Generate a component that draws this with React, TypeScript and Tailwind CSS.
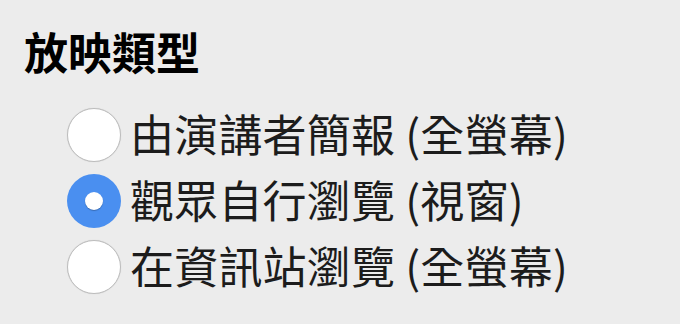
const FONT = '"Noto Sans CJK TC", "Noto Sans", sans-serif';

const options = [
  { label: '由演講者簡報 (全螢幕)', checked: false },
  { label: '觀眾自行瀏覽 (視窗)', checked: true },
  { label: '在資訊站瀏覽 (全螢幕)', checked: false },
];

function Radio({ checked }: { checked: boolean }) {
  if (checked) {
    return (
      <span className="flex h-[54px] w-[54px] shrink-0 items-center justify-center rounded-full bg-[#4a8ff0]">
        <span className="h-[18px] w-[18px] rounded-full bg-white shadow-[0_1px_1px_rgba(0,0,0,0.25)]" />
      </span>
    );
  }
  return (
    <span className="h-[54px] w-[54px] shrink-0 rounded-full border-[1.5px] border-[#bdbdbd] bg-white shadow-[0_0_1px_rgba(0,0,0,0.15)]" />
  );
}

export default function App() {
  return (
    <div className="h-[324px] w-[680px] bg-[#ececec] pl-[24px] pt-[23px]" style={{ fontFamily: FONT }}>
      <div className="text-[44px] font-bold leading-[56px] text-black">放映類型</div>
      <div className="mt-[29px] flex flex-col gap-[12px] pl-[43px]">
        {options.map((o) => (
          <label key={o.label} className="flex h-[54px] items-center gap-[9px]">
            <Radio checked={o.checked} />
            <span className="pb-[4px] text-[44px] leading-[50px] tracking-[0.2px] text-[#1c1c1c]">{o.label}</span>
          </label>
        ))}
      </div>
    </div>
  );
}
